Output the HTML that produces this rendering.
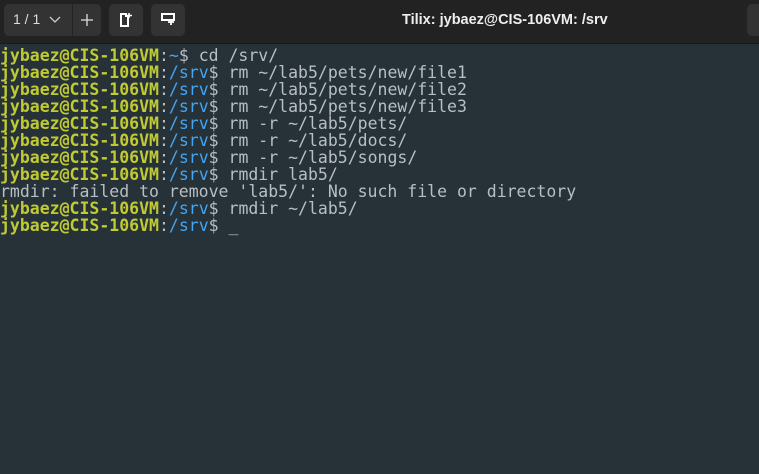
<!DOCTYPE html>
<html><head><style>
body{margin:0;width:759px;height:474px;overflow:hidden;background:#263238;font-family:"Liberation Sans",sans-serif}
.hdr{position:absolute;left:0;top:0;width:759px;height:43px;background:#222222;border-bottom:1px solid #1a1a1a}
.btn{position:absolute;top:4px;height:32px;background:#333;border-radius:5px}
.title{position:absolute;top:12px;left:402px;color:#eee;font-weight:bold;font-size:14.5px;white-space:nowrap}
.term{position:absolute;left:0;top:47px;font-family:"DejaVu Sans Mono","Liberation Mono",monospace;font-size:16.5px;line-height:17px;color:#b8bfc4;white-space:pre}
.u{color:#c0ca33;font-weight:bold}.p{color:#42a5f5}
</style></head><body>
<div class="hdr">
<div class="btn" style="left:4px;width:97px"></div>
<div style="position:absolute;left:72px;top:4px;width:1px;height:32px;background:#222"></div>
<div style="position:absolute;left:13px;top:11px;color:#ddd;font-size:14px">1 / 1</div>
<svg style="position:absolute;left:49px;top:16px" width="12" height="8"><path d="M1 1l5 5 5-5" stroke="#ccc" stroke-width="1.3" fill="none"/></svg>
<svg style="position:absolute;left:79px;top:12px" width="16" height="16"><path d="M8 2v12M2 8h12" stroke="#ddd" stroke-width="1.3"/></svg>
<div class="btn" style="left:109px;width:34px"></div>
<svg style="position:absolute;left:119px;top:12px" width="14" height="16"><path d="M2 2h5v2h2v10H2z" fill="none" stroke="#fff" stroke-width="2"/><path d="M10 1v5M8 3.5h5" stroke="#fff" stroke-width="1.6"/></svg>
<div class="btn" style="left:151px;width:34px"></div>
<svg style="position:absolute;left:160px;top:12px" width="16" height="14"><path d="M2 2h12v6H2z" fill="none" stroke="#fff" stroke-width="2"/><path d="M11 7v6M8 10h6" stroke="#fff" stroke-width="1.8"/></svg>
<div class="title">Tilix: jybaez@CIS-106VM: /srv</div>
<div class="btn" style="left:747px;width:20px"></div>
</div>
<div class="term"><span class="u">jybaez@CIS-106VM</span>:<span class="p">~</span>$ cd /srv/
<span class="u">jybaez@CIS-106VM</span>:<span class="p">/srv</span>$ rm ~/lab5/pets/new/file1
<span class="u">jybaez@CIS-106VM</span>:<span class="p">/srv</span>$ rm ~/lab5/pets/new/file2
<span class="u">jybaez@CIS-106VM</span>:<span class="p">/srv</span>$ rm ~/lab5/pets/new/file3
<span class="u">jybaez@CIS-106VM</span>:<span class="p">/srv</span>$ rm -r ~/lab5/pets/
<span class="u">jybaez@CIS-106VM</span>:<span class="p">/srv</span>$ rm -r ~/lab5/docs/
<span class="u">jybaez@CIS-106VM</span>:<span class="p">/srv</span>$ rm -r ~/lab5/songs/
<span class="u">jybaez@CIS-106VM</span>:<span class="p">/srv</span>$ rmdir lab5/
rmdir: failed to remove 'lab5/': No such file or directory
<span class="u">jybaez@CIS-106VM</span>:<span class="p">/srv</span>$ rmdir ~/lab5/
<span class="u">jybaez@CIS-106VM</span>:<span class="p">/srv</span>$ _</div>
</body></html>
